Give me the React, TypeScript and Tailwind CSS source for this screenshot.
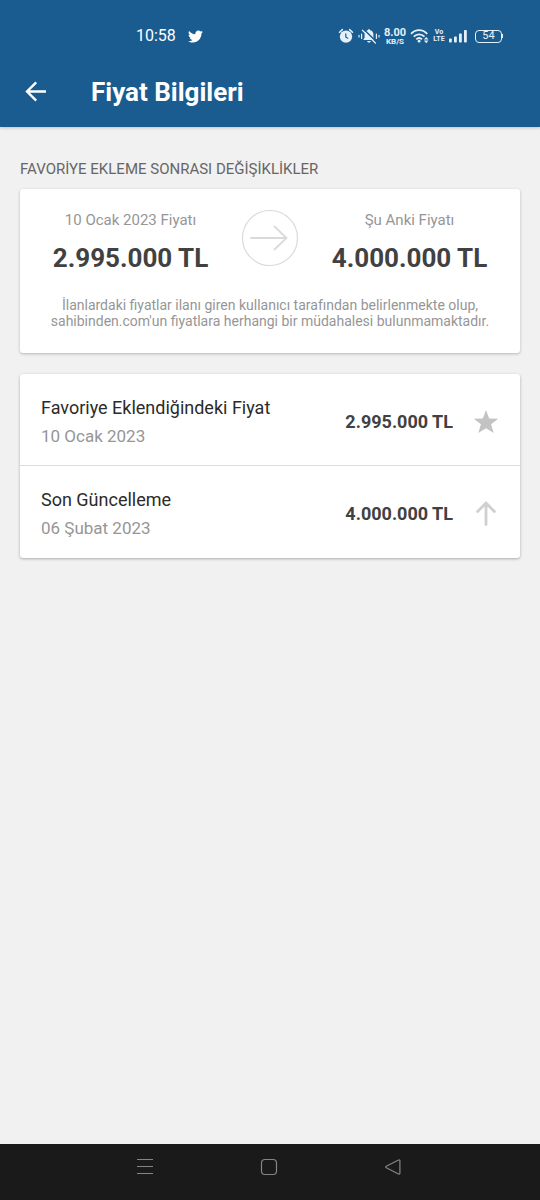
import type { ReactNode } from "react"
import { FaTwitter } from "react-icons/fa"

type PriceProps = {
  label: string
  price: string
}

type HistoryItem = {
  title: string
  date: string
  price: string
  icon: ReactNode
}

function AlarmIcon() {
  return (
    <svg width="16" height="16" viewBox="0 0 16 16" fill="none">
      <circle cx="8" cy="8.6" r="6.2" fill="#e6f0fa" />
      <path d="M1.5 4.2 4.4 1.6M14.5 4.2l-2.900-2.600" stroke="#e6f0fa" strokeWidth="1.5" strokeLinecap="round" />
      <path d="M7.800 5.800v3.200l1.900 1.200" stroke="#1a5c90" strokeWidth="1.200" strokeLinecap="round" />
    </svg>
  )
}

function BellOffIcon() {
  return (
    <svg width="22" height="16" viewBox="0 0 22 16" fill="none">
      <path d="M11 1.200c.8 0 1.200.5 1.200 1.100 2.100.6 3.200 2.100 3.200 4.200v3l1.400 2.500H5.200l1.400-2.500v-3c0-2.100 1.100-3.600 3.200-4.200 0-.6.4-1.100 1.200-1.100Z" fill="#e6f0fa" />
      <path d="M9.200 13h3.600c-.2 1-.9 1.600-1.800 1.600S9.400 14 9.200 13Z" fill="#e6f0fa" />
      <path d="M5.400 1 18.400 13.800" stroke="#1a5c90" strokeWidth="1.600" />
      <path d="M4.400 2.200 17.400 15" stroke="#e6f0fa" strokeWidth="1.200" strokeLinecap="round" />
      <path d="M3.600 6v4.500M18.400 6v4.500M1 7.400v1.600M21 7.400v1.600" stroke="#e6f0fa" strokeWidth="1.200" strokeLinecap="round" />
    </svg>
  )
}

function WifiIcon() {
  return (
    <svg width="19" height="16" viewBox="0 0 19 16" fill="none">
      <path d="M1 5.800C5.600.9 12.600.9 17.200 5.800M3.700 8.700c3.100-3.200 7.700-3.200 10.800 0M6.300 11.400c1.700-1.700 4-1.700 5.700 0" stroke="#e6f0fa" strokeWidth="1.800" />
      <circle cx="9.100" cy="13.200" r="1.400" fill="#e6f0fa" />
      <path d="m16.200 9 2.300 2.600h-4.600L16.200 9ZM16.200 15.200l2.300-2.600h-4.600l2.300 2.600Z" fill="#e6f0fa" />
    </svg>
  )
}

function SignalIcon() {
  return (
    <svg width="18" height="14" viewBox="0 0 18 14" fill="#e6f0fa">
      <rect x="0" y="9.500" width="2.800" height="4" rx=".8" />
      <rect x="5" y="7.500" width="2.800" height="6" rx=".8" />
      <rect x="10" y="4.500" width="2.800" height="9" rx=".8" />
      <rect x="15" y="1" width="2.800" height="12.500" rx=".8" />
    </svg>
  )
}

function StatusBar() {
  return (
    <div className="flex h-14 items-center justify-between pl-34 pr-[37px] pt-4">
      <div className="flex items-center gap-3">
        <span className="text-base leading-5">10:58</span>
        <FaTwitter size={15} />
      </div>
      <div className="flex items-center text-[#e6f0fa]">
        <AlarmIcon />
        <span className="ml-1">
          <BellOffIcon />
        </span>
        <div className="ml-1 w-[22px] text-center font-bold">
          <p className="text-[11px] leading-[11px]">8.00</p>
          <p className="text-[8px] leading-2">KB/S</p>
        </div>
        <span className="ml-1">
          <WifiIcon />
        </span>
        <div className="ml-1 w-3 text-center text-[7px] font-bold leading-[7px]">
          <p>Vo</p>
          <p>LTE</p>
        </div>
        <span className="ml-1">
          <SignalIcon />
        </span>
        <div className="ml-2 flex items-center">
          <div className="flex h-[13px] w-[27px] items-center justify-center rounded-[4px] border border-[#e6f0fa] text-[11px] leading-3">
            54
          </div>
          <div className="h-1 w-px bg-[#e6f0fa]" />
        </div>
      </div>
    </div>
  )
}

function Toolbar() {
  return (
    <div className="flex h-[71px] items-center gap-[35px] pl-4">
      <button type="button" aria-label="Geri" className="flex size-10 items-center justify-center">
        <svg width="22" height="22" viewBox="0 0 22 22" fill="none" stroke="#fff" strokeWidth="2.400">
          <path d="M21 10.500H2.500M11.200 1.300 2 10.500l9.200 9.200" />
        </svg>
      </button>
      <h1 className="text-[26px] font-bold leading-8">Fiyat Bilgileri</h1>
    </div>
  )
}

function Price({ label, price }: PriceProps) {
  return (
    <div className="flex-1 text-center">
      <p className="text-[15px] leading-[22px] text-[#969696]">{label}</p>
      <p className="mt-[11px] text-[26px] font-bold leading-8 text-[#414141]">{price}</p>
    </div>
  )
}

const history: HistoryItem[] = [
  {
    title: "Favoriye Eklendiğindeki Fiyat",
    date: "10 Ocak 2023",
    price: "2.995.000 TL",
    icon: (
      <svg width="26" height="26" viewBox="0 0 26 26" fill="#c3c3c3">
        <path d="m13 1 3.200 8.400 9 .3-7.100 5.600L20.700 24 13 19.200 5.300 24l2.600-8.700L.8 9.700l9-.3L13 1Z" />
      </svg>
    ),
  },
  {
    title: "Son Güncelleme",
    date: "06 Şubat 2023",
    price: "4.000.000 TL",
    icon: (
      <svg width="26" height="26" viewBox="0 0 26 26" fill="none" stroke="#d0d0d0" strokeWidth="2.800" strokeLinecap="round" strokeLinejoin="round">
        <path d="M13 23.500V2M4.600 10.500 13 2l8.400 8.500" />
      </svg>
    ),
  },
]

function HistoryRow({ title, date, price, icon }: HistoryItem) {
  return (
    <li className="flex h-[92px] items-center px-[21px] pt-1">
      <div className="flex-1">
        <p className="text-[18px] leading-6 text-[#2b2b2b]">{title}</p>
        <p className="mt-1 text-[17px] leading-6 text-[#969696]">{date}</p>
      </div>
      <p className="text-[18px] font-bold leading-6 text-[#414141]">{price}</p>
      <span className="ml-5">{icon}</span>
    </li>
  )
}

function NavBar() {
  return (
    <nav className="flex h-14 justify-center bg-[#1a1a1a] pb-[10px] pr-[2px]">
      <button type="button" aria-label="Son uygulamalar" className="flex w-31 items-center justify-center">
        <svg width="18" height="18" viewBox="0 0 18 18" fill="none" stroke="#858585">
          <path d="M1 1.500h16M1 8.500h16M1 15.500h16" />
        </svg>
      </button>
      <button type="button" aria-label="Ana ekran" className="flex w-31 items-center justify-center">
        <svg width="18" height="18" viewBox="0 0 18 18" fill="none" stroke="#858585" strokeWidth="1.200">
          <rect x="1.500" y="1.500" width="15" height="15" rx="3.500" />
        </svg>
      </button>
      <button type="button" aria-label="Geri dön" className="flex w-31 items-center justify-center">
        <svg width="18" height="18" viewBox="0 0 18 18" fill="none" stroke="#858585" strokeWidth="1.200" strokeLinejoin="round">
          <path d="M15.900 2.800v12.400c0 .9-.7 1.200-1.400.8L2.300 9.800c-.8-.4-.8-1.200 0-1.600L14.500 2c.7-.4 1.400-.1 1.400.8Z" />
        </svg>
      </button>
    </nav>
  )
}

export default function App() {
  return (
    <div className="flex min-h-screen flex-col bg-[#f1f1f1] font-['Roboto',sans-serif]">
      <header className="bg-[#1a5c90] text-white shadow-[0_1px_3px_rgba(0,0,0,0.2)]">
        <StatusBar />
        <Toolbar />
      </header>

      <main className="flex-1 px-5 pt-8">
        <h2 className="text-[15px] leading-5 text-[#666666]">FAVORİYE EKLEME SONRASI DEĞİŞİKLİKLER</h2>

        <section className="mt-[10px] rounded-[3px] bg-white pb-6 pt-5 shadow-[0_1px_3px_rgba(0,0,0,0.25)]">
          <div className="flex items-start">
            <Price label="10 Ocak 2023 Fiyatı" price="2.995.000 TL" />
            <svg width="58" height="58" viewBox="0 0 58 58" fill="none" stroke="#dadada">
              <circle cx="29" cy="29" r="27.500" strokeWidth="1.200" />
              <path d="M10 29h35.500M33.500 17.500 45.500 29l-12 11.500" strokeWidth="1.800" strokeLinecap="round" />
            </svg>
            <Price label="Şu Anki Fiyatı" price="4.000.000 TL" />
          </div>
          <p className="mt-[23px] px-5 text-center text-sm leading-4 text-[#969696]">
            İlanlardaki fiyatlar ilanı giren kullanıcı tarafından belirlenmekte olup, sahibinden.com'un fiyatlara herhangi bir
            müdahalesi bulunmamaktadır.
          </p>
        </section>

        <ul className="mt-[21px] divide-y divide-[#dcdcdc] rounded-[3px] bg-white shadow-[0_1px_3px_rgba(0,0,0,0.3)]">
          {history.map((item) => (
            <HistoryRow key={item.title} {...item} />
          ))}
        </ul>
      </main>

      <NavBar />
    </div>
  )
}
